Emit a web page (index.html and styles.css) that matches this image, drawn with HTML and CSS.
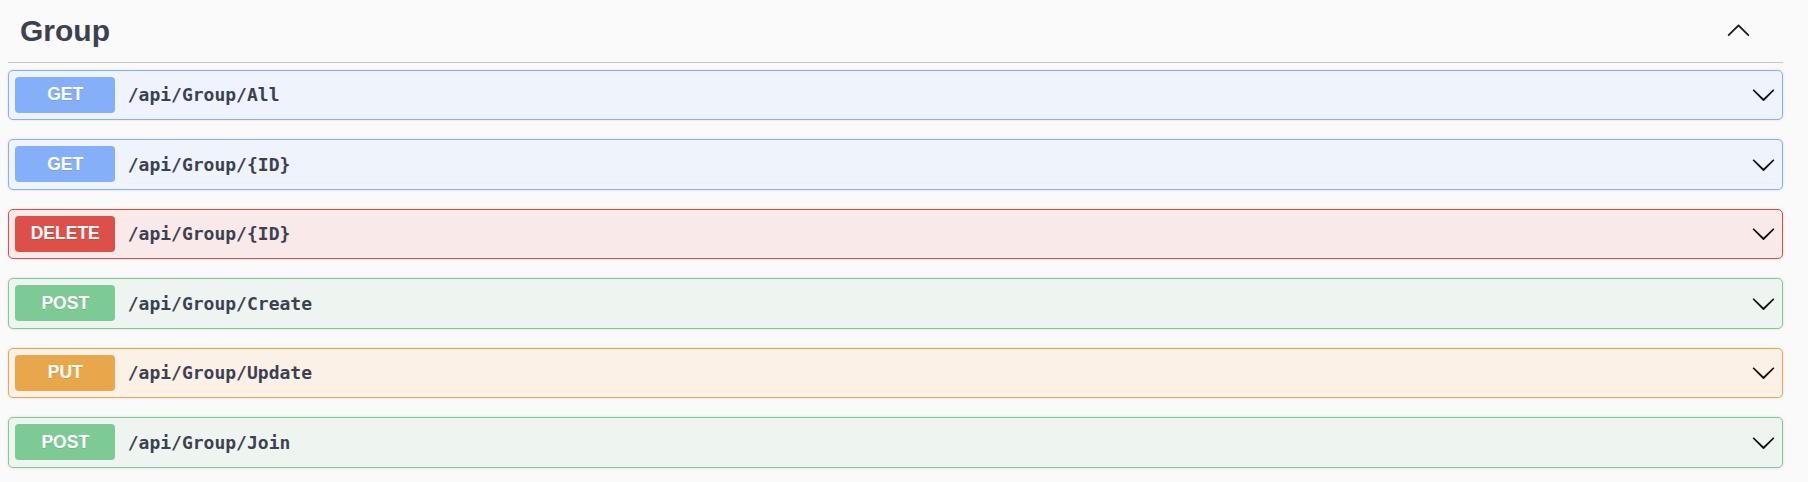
FILE: index.html
```html
<!DOCTYPE html>
<html lang="en">
<head>
<meta charset="utf-8">
<title>Group</title>
<link rel="stylesheet" href="styles.css">
</head>
<body>
<div class="section">
  <div class="tag-header">
    <h3 class="tag-title">Group</h3>
    <svg class="arrow-up" viewBox="0 0 20 20" width="25" height="25"><path d="M17.418 14.908c.272.268.709.268.979 0s.271-.701 0-.969l-7.908-7.83c-.27-.268-.707-.268-.979 0l-7.908 7.83c-.27.268-.27.701 0 .969.271.268.709.268.979 0L10 7.767l7.418 7.141z"/></svg>
  </div>

  <div class="op op-get">
    <span class="method">GET</span>
    <span class="path">/api/Group/All</span>
    <svg class="arrow" viewBox="0 0 20 20" width="25" height="25"><path d="M17.418 6.109c.272-.268.709-.268.979 0s.271.701 0 .969l-7.908 7.83c-.27.268-.707.268-.979 0l-7.908-7.83c-.27-.268-.27-.701 0-.969.271-.268.709-.268.979 0L10 13.25l7.418-7.141z"/></svg>
  </div>
  <div class="op op-get">
    <span class="method">GET</span>
    <span class="path">/api/Group/{ID}</span>
    <svg class="arrow" viewBox="0 0 20 20" width="25" height="25"><path d="M17.418 6.109c.272-.268.709-.268.979 0s.271.701 0 .969l-7.908 7.83c-.27.268-.707.268-.979 0l-7.908-7.83c-.27-.268-.27-.701 0-.969.271-.268.709-.268.979 0L10 13.25l7.418-7.141z"/></svg>
  </div>
  <div class="op op-delete">
    <span class="method">DELETE</span>
    <span class="path">/api/Group/{ID}</span>
    <svg class="arrow" viewBox="0 0 20 20" width="25" height="25"><path d="M17.418 6.109c.272-.268.709-.268.979 0s.271.701 0 .969l-7.908 7.83c-.27.268-.707.268-.979 0l-7.908-7.83c-.27-.268-.27-.701 0-.969.271-.268.709-.268.979 0L10 13.25l7.418-7.141z"/></svg>
  </div>
  <div class="op op-post">
    <span class="method">POST</span>
    <span class="path">/api/Group/Create</span>
    <svg class="arrow" viewBox="0 0 20 20" width="25" height="25"><path d="M17.418 6.109c.272-.268.709-.268.979 0s.271.701 0 .969l-7.908 7.83c-.27.268-.707.268-.979 0l-7.908-7.83c-.27-.268-.27-.701 0-.969.271-.268.709-.268.979 0L10 13.25l7.418-7.141z"/></svg>
  </div>
  <div class="op op-put">
    <span class="method">PUT</span>
    <span class="path">/api/Group/Update</span>
    <svg class="arrow" viewBox="0 0 20 20" width="25" height="25"><path d="M17.418 6.109c.272-.268.709-.268.979 0s.271.701 0 .969l-7.908 7.83c-.27.268-.707.268-.979 0l-7.908-7.83c-.27-.268-.27-.701 0-.969.271-.268.709-.268.979 0L10 13.25l7.418-7.141z"/></svg>
  </div>
  <div class="op op-post">
    <span class="method">POST</span>
    <span class="path">/api/Group/Join</span>
    <svg class="arrow" viewBox="0 0 20 20" width="25" height="25"><path d="M17.418 6.109c.272-.268.709-.268.979 0s.271.701 0 .969l-7.908 7.83c-.27.268-.707.268-.979 0l-7.908-7.83c-.27-.268-.27-.701 0-.969.271-.268.709-.268.979 0L10 13.25l7.418-7.141z"/></svg>
  </div>
</div>
</body>
</html>
```

FILE: styles.css
```css
html, body {
  margin: 0;
  padding: 0;
  background: #fafafa;
}

.section {
  margin-left: 8px;
  width: 1775px;
  font-family: "Liberation Sans", Arial, sans-serif;
}

.tag-header {
  display: flex;
  align-items: center;
  height: 63px;
  box-sizing: border-box;
  padding: 0 32px 0 12px;
  border-bottom: 1px solid #c4c5c9;
  margin-bottom: 6.5px;
}

.tag-title {
  margin: 0;
  font-size: 30px;
  font-weight: bold;
  color: #3b4151;
  line-height: 34px;
  padding-bottom: 1px;
}

.arrow-up {
  margin-left: auto;
  margin-bottom: 3px;
  fill: #1a1a1a;
}

.op {
  display: flex;
  align-items: center;
  box-sizing: border-box;
  height: 50.5px;
  padding: 6.25px;
  margin-bottom: 19px;
  border: 1px solid;
  border-radius: 5px;
  box-shadow: 0 0 3px rgba(0, 0, 0, 0.12);
}

.method {
  width: 100px;
  height: 36px;
  flex: none;
  display: flex;
  align-items: center;
  justify-content: center;
  border-radius: 3.75px;
  color: #fff;
  font-size: 17.5px;
  font-weight: bold;
  text-shadow: 0 1px 0 rgba(0, 0, 0, 0.1);
}

.path {
  padding: 0 12.5px;
  font-family: "DejaVu Sans Mono", "Liberation Mono", monospace;
  font-size: 18px;
  font-weight: bold;
  color: #3b4151;
}

.arrow {
  margin-left: auto;
  flex: none;
  fill: #111;
}

.op-get { background: #eef3fc; border-color: #86affa; }
.op-get .method { background: #86affa; }

.op-delete { background: #f9e9e8; border-color: #dd5049; }
.op-delete .method { background: #dd5049; }

.op-post { background: #eef5f0; border-color: #7dca95; }
.op-post .method { background: #7dca95; }

.op-put { background: #fbf1e7; border-color: #e9a74b; }
.op-put .method { background: #e9a74b; }
```
